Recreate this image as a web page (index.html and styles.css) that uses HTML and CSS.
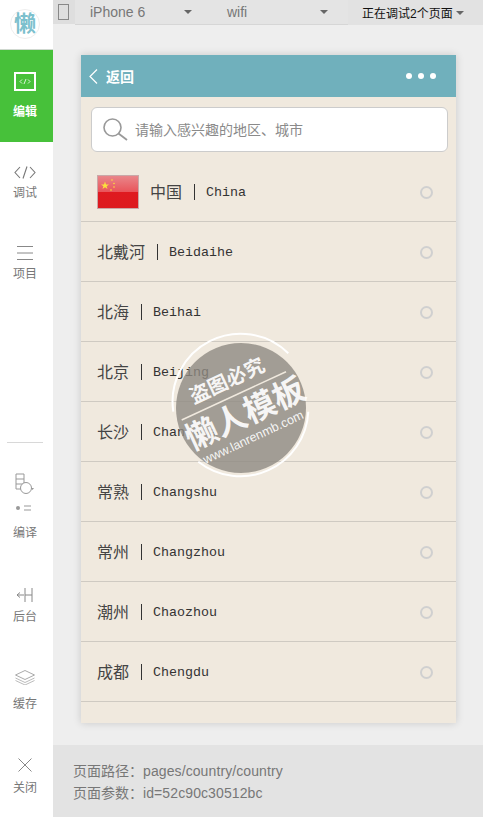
FILE: index.html
```html
<!DOCTYPE html>
<html lang="zh-CN">
<head>
    <meta charset="UTF-8">
    <title>调试</title>
    <link rel="stylesheet" href="styles.css">
</head>
<body>
    <div class="sidebar">
        <div class="logo"><span class="logo-mark">懒</span></div>
        <div class="side-item side-edit">
            <svg class="gap-13" width="22" height="19" viewBox="0 0 22 19"><rect x="1" y="1" width="20" height="17" fill="none" stroke="#fff" stroke-width="2"/><path d="M8 7.5 6 9.5 8 11.5M14 7.5 16 9.5 14 11.5M12 7 10 12" fill="none" stroke="#fff" stroke-width=".8"/></svg>
            <span class="side-label">编辑</span>
        </div>
        <div class="side-item side-debug">
            <svg class="gap-6" width="22" height="13" viewBox="0 0 22 13"><path d="M6 1 1 6.5 6 12M16 1 21 6.5 16 12M13 .5 9 12.5" fill="none" stroke="#777" stroke-width="1.1"/></svg>
            <span class="side-label">调试</span>
        </div>
        <div class="side-item side-project">
            <svg class="gap-6" width="16" height="14" viewBox="0 0 16 14"><path d="M0 .5H16M0 7H16M0 13.5H16" stroke="#888" stroke-width="1"/></svg>
            <span class="side-label">项目</span>
        </div>
        <div class="side-divider"></div>
        <div class="side-item side-compile">
            <svg class="gap-13" width="20" height="39" viewBox="0 0 20 39"><path d="M9 16H1V1H9V16M1 6H9M1 11H8" fill="none" stroke="#999"/><circle cx="11" cy="15" r="5.5" fill="#fff" stroke="#999"/><path d="M16 15H19L17.500 17Z" fill="#999"/><circle cx="3" cy="35" r="2" fill="#999"/><path d="M9 33H16M9 37H16" stroke="#999"/></svg>
            <span class="side-label">编译</span>
        </div>
        <div class="side-item side-backend">
            <svg class="gap-7" width="16" height="14" viewBox="0 0 16 14"><path d="M0 7H7M0 7 3 4.5M0 7 3 9.5M8 0V14M15 0V14M8 7H15" fill="none" stroke="#888"/></svg>
            <span class="side-label">后台</span>
        </div>
        <div class="side-item side-cache">
            <svg class="gap-11" width="20" height="15" viewBox="0 0 20 15"><path d="M10 .5 19.5 5 10 9.5 .5 5Z" fill="none" stroke="#aaa"/><path d="M.5 8 10 12.5 19.5 8M.5 10.5 10 15 19.5 10.5" fill="none" stroke="#bbb"/></svg>
            <span class="side-label">缓存</span>
        </div>
        <div class="side-item side-close">
            <svg class="gap-8" width="14" height="14" viewBox="0 0 14 14"><path d="M.5 .5 13.5 13.5M13.5 .5 .5 13.5" stroke="#888"/></svg>
            <span class="side-label">关闭</span>
        </div>
    </div>

    <div class="main">
        <div class="toolbar">
            <div class="tool-phone"><span class="phone-icon"></span></div>
            <div class="tool-device">
                <span class="device-name">iPhone 6</span><span class="caret"></span>
                <span class="device-net">wifi</span><span class="caret"></span>
            </div>
            <div class="tool-pages">正在调试2个页面<span class="caret caret-pages"></span></div>
        </div>

        <div class="stage">
            <div class="phone">
                <div class="nav">
                    <svg width="9" height="15" viewBox="0 0 9 15"><path d="M8 .5 1 7.5 8 14.5" fill="none" stroke="#fff" stroke-width="1.2"/></svg>
                    <span class="nav-back">返回</span>
                    <span class="nav-dots"><i></i><i></i><i></i></span>
                </div>
                <div class="search-wrap">
                    <div class="search">
                        <svg width="25" height="23" viewBox="0 0 25 23"><circle cx="9.5" cy="9.5" r="8.5" fill="none" stroke="#999" stroke-width="1.6"/><path d="M15.5 15.5 24 22" stroke="#999" stroke-width="1.8"/></svg>
                        <span class="search-text">请输入感兴趣的地区、城市</span>
                    </div>
                </div>
                <div class="list">
                    <div class="row">
                        <div class="flag">
                            <svg width="40" height="32" viewBox="0 0 40 32"><path d="M7 5.5 8 8.4H11L8.6 10.2 9.5 13 7 11.3 4.500 13 5.400 10.200 3 8.400H6Z" fill="#fbe13c"/><circle cx="14" cy="4" r=".8" fill="#fbe13c"/><circle cx="16" cy="7.500" r=".8" fill="#fbe13c"/><circle cx="16" cy="11" r=".8" fill="#fbe13c"/><circle cx="13" cy="14" r=".8" fill="#fbe13c"/></svg>
                        </div>
                        <span class="name-cn">中国</span><span class="sep"></span><span class="name-en">China</span><span class="radio"></span>
                    </div>
                    <div class="row"><span class="name-cn">北戴河</span><span class="sep"></span><span class="name-en">Beidaihe</span><span class="radio"></span></div>
                    <div class="row"><span class="name-cn">北海</span><span class="sep"></span><span class="name-en">Beihai</span><span class="radio"></span></div>
                    <div class="row"><span class="name-cn">北京</span><span class="sep"></span><span class="name-en">Beijing</span><span class="radio"></span></div>
                    <div class="row"><span class="name-cn">长沙</span><span class="sep"></span><span class="name-en">Changsha</span><span class="radio"></span></div>
                    <div class="row"><span class="name-cn">常熟</span><span class="sep"></span><span class="name-en">Changshu</span><span class="radio"></span></div>
                    <div class="row"><span class="name-cn">常州</span><span class="sep"></span><span class="name-en">Changzhou</span><span class="radio"></span></div>
                    <div class="row"><span class="name-cn">潮州</span><span class="sep"></span><span class="name-en">Chaozhou</span><span class="radio"></span></div>
                    <div class="row"><span class="name-cn">成都</span><span class="sep"></span><span class="name-en">Chengdu</span><span class="radio"></span></div>
                </div>

                <!-- watermark stamp -->
                <svg class="stamp" width="140" height="140" viewBox="0 0 140 140">
                    <circle cx="70" cy="70" r="65" fill="#8f8a82" fill-opacity=".8"/>
                    <path d="M2.300 73.700A68 68 0 0 1 117.300 15.300M27.300 123.700A68 68 0 0 0 137.300 73.700" fill="none" stroke="#fff" stroke-width="2"/>
                    <path d="M10.700 82 115 33.700" stroke="#f0e9de" stroke-width="1.500"/>
                    <text class="stamp-top" transform="translate(59 49) rotate(-25)" text-anchor="middle">盗图必究</text>
                    <text class="stamp-main" transform="translate(79 86) rotate(-25)" text-anchor="middle">懒人模板</text>
                    <text class="stamp-url" transform="translate(84 103) rotate(-25)" text-anchor="middle">www.lanrenmb.com</text>
                </svg>
            </div>
        </div>

        <div class="footer">
            <p>页面路径<span class="colon">：</span><span class="path">pages/country/country</span></p>
            <p>页面参数<span class="colon">：</span><span class="path">id=52c90c30512bc</span></p>
        </div>
    </div>
</body>
</html>
```

FILE: styles.css
```css
* {
    box-sizing: border-box;
}

html, body {
    height: 100%;
}

body {
    margin: 0;
    display: flex;
    overflow: hidden;
    font-family: "Liberation Sans", "Noto Sans CJK SC", sans-serif;
    background-color: #eeeeee;
}

/* left column */
.sidebar {
    width: 53px;
    flex-shrink: 0;
    background-color: #fff;
    display: flex;
    flex-direction: column;
}

.logo {
    height: 50px;
    padding-right: 3px;
    border-bottom: 1px solid #cfd8cf;
    display: flex;
    align-items: center;
    justify-content: center;
}

.logo-mark {
    width: 30px;
    height: 30px;
    margin-bottom: 2px;
    border: 1px solid #eeeeee;
    border-radius: 50%;
    color: #7cc0cd;
    font-size: 22px;
    font-weight: bold;
    line-height: 28px;
    text-align: center;
}

.side-item {
    padding-right: 3px;
    display: flex;
    flex-direction: column;
    align-items: center;
    justify-content: flex-end;
}

.side-label {
    font-size: 12px;
    line-height: 16px;
    color: #777;
}

.side-edit {
    height: 92px;
    padding-bottom: 22px;
    background-color: #47c13a;
}

.side-edit .side-label {
    color: #fff;
    font-weight: bold;
}

.side-debug { height: 59px; }
.side-project { height: 81px; }
.side-compile { height: 98px; }
.side-backend { height: 84px; }
.side-cache { height: 87px; }
.side-close { height: 84px; }

.gap-6 { margin-bottom: 6px; }
.gap-7 { margin-bottom: 7px; }
.gap-8 { margin-bottom: 8px; }
.gap-11 { margin-bottom: 11px; }
.gap-13 { margin-bottom: 13px; }

.side-divider {
    height: 1px;
    margin: 160px 10px 0 7px;
    background-color: #d8d8d8;
}

/* main column */
.main {
    flex: 1;
    display: flex;
    flex-direction: column;
    min-width: 0;
}

.toolbar {
    height: 25px;
    display: flex;
    flex-shrink: 0;
    font-size: 14px;
    color: #777;
}

.tool-phone {
    width: 22px;
    height: 24px;
    padding: 4px 0 0 5px;
    background-color: #dedede;
}

.phone-icon {
    display: block;
    width: 11px;
    height: 16px;
    border: 1px solid #888;
}

.tool-device {
    width: 273px;
    height: 25px;
    padding-left: 15px;
    display: flex;
    align-items: center;
    background-color: #e4e4e4;
    border-bottom: 1px solid #d6d6d6;
}

.device-name {
    width: 94px;
}

.device-net {
    width: 93px;
    margin-left: 35px;
}

.caret {
    width: 0;
    height: 0;
    border-style: solid;
    border-width: 4px 4px 0;
    border-color: #666 transparent transparent;
}

.tool-pages {
    flex: 1;
    height: 25px;
    padding-left: 14px;
    display: flex;
    align-items: center;
    font-size: 12px;
    color: #111;
    background-color: #e2e2e2;
}

.caret-pages {
    margin-left: 3px;
}

.stage {
    flex: 1;
    padding: 30px 0 0 28px;
}

.phone {
    position: relative;
    width: 375px;
    height: 668px;
    background-color: #f0e9de;
    box-shadow: 0 0 8px rgba(0, 0, 0, 0.16);
}

.nav {
    height: 42px;
    padding: 0 20px 0 8px;
    display: flex;
    align-items: center;
    background-color: #70b0bc;
    color: #fff;
}

.nav-back {
    margin-left: 8px;
    font-size: 14px;
    font-weight: bold;
}

.nav-dots {
    margin-left: auto;
    display: flex;
    gap: 6px;
}

.nav-dots i {
    width: 6px;
    height: 6px;
    border-radius: 50%;
    background-color: #fff;
}

.search-wrap {
    padding: 10px 8px 11px 10px;
}

.search {
    height: 45px;
    padding-left: 11px;
    display: flex;
    align-items: center;
    gap: 7px;
    background-color: #fff;
    border: 1px solid #cccccc;
    border-radius: 6px;
    font-size: 14px;
    color: #8a8a8a;
}

.search-text {
    margin-bottom: 2px;
}

.list {
    margin-top: -1px;
}

.row {
    height: 60px;
    padding: 0 23px 0 16px;
    display: flex;
    align-items: center;
    border-bottom: 1px solid #cfcac2;
    color: #444;
}

.flag {
    width: 42px;
    height: 34px;
    margin-right: 11px;
    border: 1px solid #c9a8a8;
    background: linear-gradient(#e9868a, #e9545a 50%, #df1a20 50%, #dd1a1f);
}

.flag svg {
    display: block;
}

.name-cn {
    margin-bottom: 2px;
    font-size: 16px;
}

.sep {
    width: 1px;
    height: 16px;
    margin: 0 11px 0 12px;
    background-color: #333;
}

.name-en {
    margin-top: 2px;
    font-family: "Liberation Mono", monospace;
    font-size: 13.33px;
    color: #333;
}

.radio {
    width: 13px;
    height: 13px;
    margin-top: 1px;
    margin-left: auto;
    border: 2px solid #d0d0d0;
    border-radius: 50%;
}

/* stamp lies over the list */
.stamp {
    position: absolute;
    left: 90px;
    top: 283px;
    overflow: visible;
}

.stamp text {
    fill: #fff;
    fill-opacity: 0.92;
}

.stamp-top {
    font-size: 20px;
    font-weight: bold;
}

.stamp-main {
    font-size: 32px;
    font-weight: bold;
}

.stamp-url {
    font-size: 12.500px;
}

.footer {
    height: 72px;
    flex-shrink: 0;
    padding: 14px 0 0 20px;
    background-color: #e3e3e3;
    font-size: 14px;
    line-height: 22px;
    color: #777;
}

.footer p {
    height: 22px;
    margin: 0;
}

.colon {
    font-family: "Noto Sans CJK TC", sans-serif;
}

.path {
    letter-spacing: 0.1px;
}
```
